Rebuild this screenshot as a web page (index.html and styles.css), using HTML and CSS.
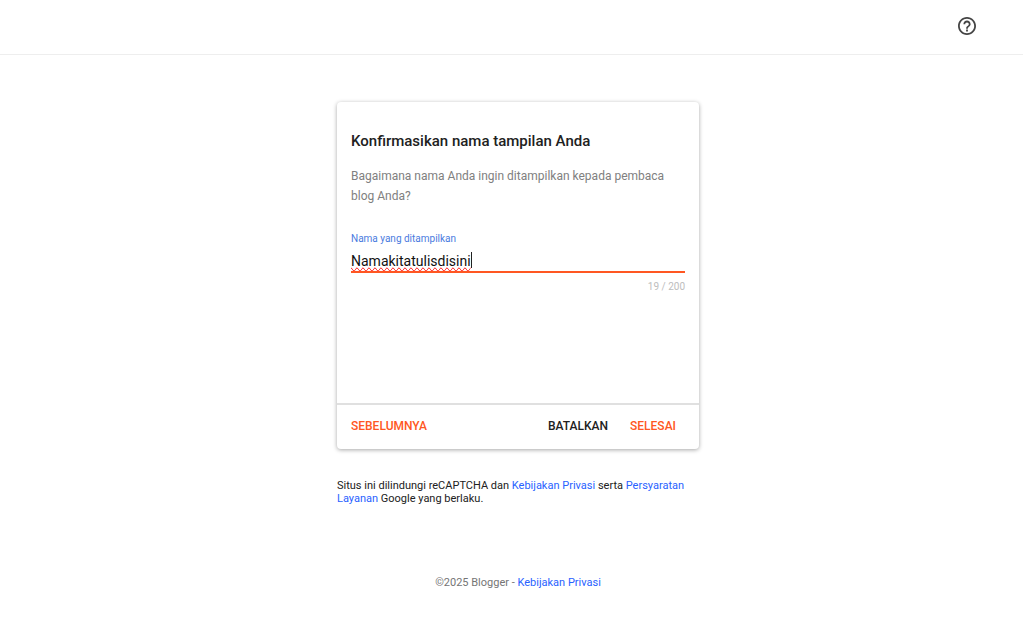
FILE: index.html
```html
<!DOCTYPE html>
<html lang="id">
<head>
    <meta charset="UTF-8">
    <meta name="viewport" content="width=device-width, initial-scale=1.0">
    <title>Blogger</title>
    <link rel="stylesheet" href="styles.css">
</head>
<body>
    <header class="header">
        <button class="help-button" type="button" aria-label="Bantuan">
            <svg width="18" height="18" viewBox="2 2 20 20" fill="currentColor" aria-hidden="true">
                <path d="M11 18h2v-2h-2v2zm1-16C6.48 2 2 6.48 2 12s4.480 10 10 10 10-4.480 10-10S17.520 2 12 2zm0 18c-4.410 0-8-3.590-8-8s3.590-8 8-8 8 3.590 8 8-3.590 8-8 8zm0-14c-2.210 0-4 1.790-4 4h2c0-1.100.9-2 2-2s2 .9 2 2c0 2-3 1.750-3 5h2c0-2.250 3-2.500 3-5 0-2.210-1.790-4-4-4z"/>
            </svg>
        </button>
    </header>

    <div class="page">
        <main class="main">
            <form class="card">
                <div class="card-body">
                    <h1 class="title">Konfirmasikan nama tampilan Anda</h1>
                    <p class="description">Bagaimana nama Anda ingin ditampilkan kepada pembaca blog Anda?</p>

                    <label class="field-label" for="displayName">Nama yang ditampilkan</label>
                    <div class="field">
                        <input class="field-input" type="text" id="displayName" value="Namakitatulisdisini" maxlength="200" spellcheck="false">
                        <span class="field-caret" aria-hidden="true"></span>
                    </div>
                    <div class="counter">19 / 200</div>
                </div>

                <div class="card-actions">
                    <button class="button button-primary" type="button">SEBELUMNYA</button>
                    <div class="actions-right">
                        <button class="button" type="button">BATALKAN</button>
                        <button class="button button-primary" type="button">SELESAI</button>
                    </div>
                </div>
            </form>

            <p class="notice">Situs ini dilindungi reCAPTCHA dan <a href="#">Kebijakan Privasi</a> serta <a href="#">Persyaratan Layanan</a> Google yang berlaku.</p>
        </main>

        <footer class="footer">©2025 Blogger - <a href="#">Kebijakan Privasi</a></footer>
    </div>
</body>
</html>
```
FILE: styles.css
```css
* {
    box-sizing: border-box;
}

body {
    margin: 0;
    font-family: Roboto, sans-serif;
    font-size: 11px;
    color: #212121;
    background-color: #fff;
}

a {
    color: #2962ff;
    text-decoration: none;
}

button {
    padding: 0;
    border: none;
    background: none;
    font-family: inherit;
    cursor: pointer;
}

.header {
    display: flex;
    justify-content: flex-end;
    padding: 17px 47px 19px;
    border-bottom: 1px solid #eee;
}

.help-button {
    display: flex;
    color: #444;
}

.page {
    padding: 47px 0 0 13px;
}

.main {
    width: 362px;
    max-width: 100%;
    margin: 0 auto;
}

.card {
    border-radius: 4px;
    box-shadow: 0 1px 4px rgba(0, 0, 0, 0.35);
}

.card-body {
    min-height: 301px;
    padding: 28px 14px 0;
}

.title {
    margin: 0 0 14px;
    font-size: 15px;
    font-weight: 500;
    line-height: 22px;
}

.description {
    margin: 0 0 26px;
    font-size: 12px;
    line-height: 20px;
    color: #808080;
}

.field-label {
    display: block;
    font-size: 10px;
    line-height: 14px;
    color: #4a7be0;
}

.field {
    position: relative;
    margin-top: 5px;
    border-bottom: 2px solid #ff5722;
}

.field-input {
    display: block;
    width: 100%;
    height: 20px;
    padding: 0;
    border: none;
    outline: none;
    font-family: inherit;
    font-size: 14px;
    line-height: 20px;
    color: #111;
    text-decoration: spelling-error;
}

/* text cursor at the end of the typed name */
.field-caret {
    position: absolute;
    top: 1px;
    left: 120px;
    width: 1px;
    height: 16px;
    background-color: #212121;
    pointer-events: none;
}

.counter {
    margin-top: 7px;
    font-size: 10px;
    line-height: 14px;
    text-align: right;
    color: #bdbdbd;
}

.card-actions {
    display: flex;
    justify-content: space-between;
    align-items: center;
    padding: 13px 23px 15px 14px;
    border-top: 2px solid #e0e0e0;
}

.actions-right {
    display: flex;
    gap: 22px;
}

.button {
    font-size: 12px;
    font-weight: 500;
    line-height: 16px;
    color: #212121;
}

.button-primary {
    color: #ff5722;
}

.notice {
    margin: 30px 0 0;
    line-height: 13px;
}

.footer {
    margin-top: 71px;
    line-height: 14px;
    text-align: center;
    color: #757575;
}
```
